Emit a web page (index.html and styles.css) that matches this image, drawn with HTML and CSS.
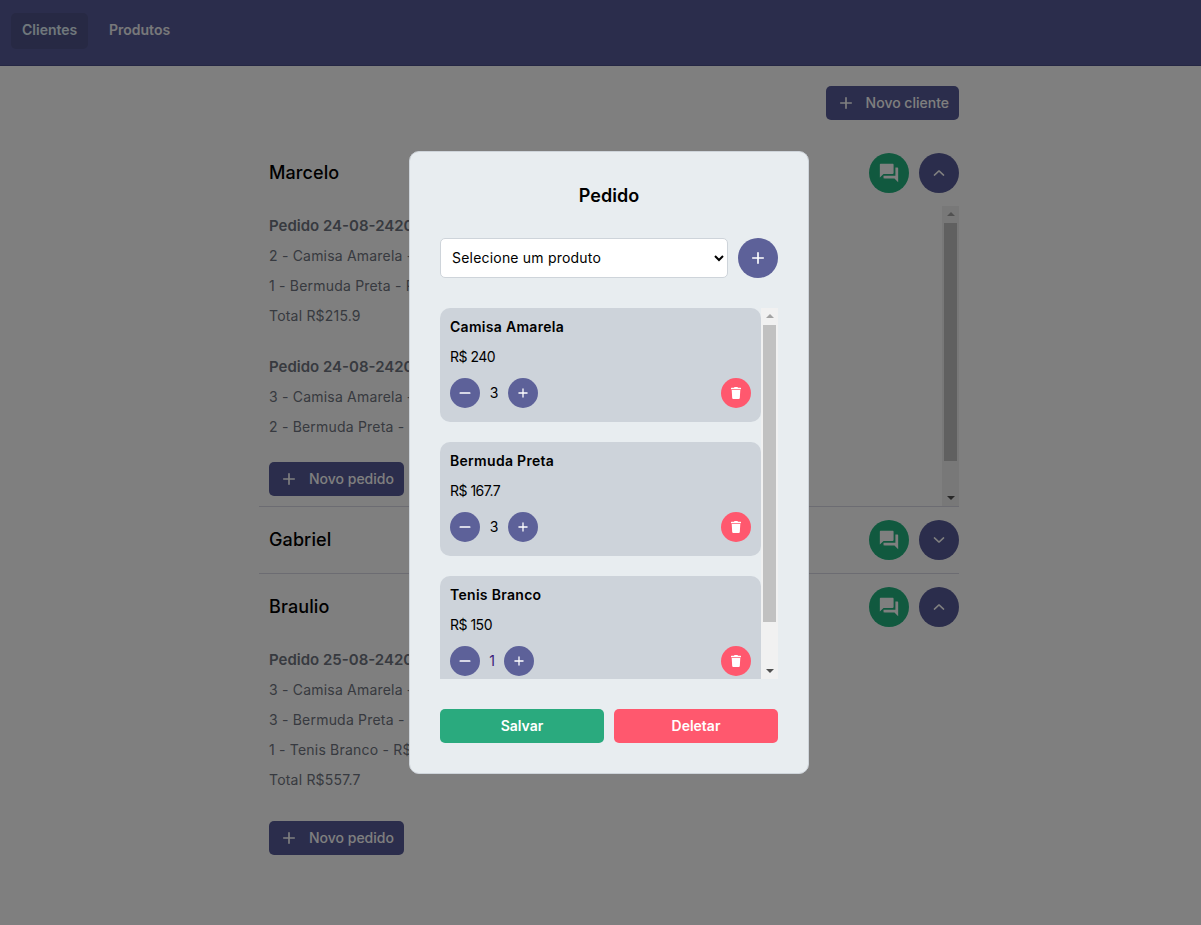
FILE: index.html
```html
<!DOCTYPE html>
<html lang="pt-BR">

<head>
    <meta charset="UTF-8">
    <title>Clientes</title>
    <link rel="stylesheet" href="styles.css">
</head>

<body>
    <svg class="sprites" width="0" height="0">
        <symbol id="i-plus" viewBox="0 0 24 24"><path d="M12 5v14M5 12h14" fill="none" stroke="currentColor" stroke-width="2.2" stroke-linecap="round"/></symbol>
        <symbol id="i-minus" viewBox="0 0 24 24"><path d="M5 12h14" fill="none" stroke="currentColor" stroke-width="2.6" stroke-linecap="round"/></symbol>
        <symbol id="i-up" viewBox="0 0 24 24"><path d="M6.500 14.500 12 9.500l5.500 5" fill="none" stroke="currentColor" stroke-width="1.8" stroke-linecap="round" stroke-linejoin="round"/></symbol>
        <symbol id="i-down" viewBox="0 0 24 24"><path d="M6.500 9.500 12 14.500l5.500-5" fill="none" stroke="currentColor" stroke-width="1.8" stroke-linecap="round" stroke-linejoin="round"/></symbol>
        <symbol id="i-chat" viewBox="0 0 24 24"><path fill="currentColor" d="M21 6h-2v9H6v2c0 .55.45 1 1 1h11l4 4V7c0-.55-.45-1-1-1zm-4 6V3c0-.55-.45-1-1-1H3c-.55 0-1 .45-1 1v14l4-4h10c.55 0 1-.45 1-1z"/></symbol>
        <symbol id="i-trash" viewBox="0 0 448 512" preserveAspectRatio="none"><path fill="currentColor" d="M432 32H312l-9.400-18.700A24 24 0 0 0 281.100 0H166.800a23.720 23.720 0 0 0-21.400 13.300L136 32H16A16 16 0 0 0 0 48v32a16 16 0 0 0 16 16h416a16 16 0 0 0 16-16V48a16 16 0 0 0-16-16zM53.200 467a48 48 0 0 0 47.900 45h245.800a48 48 0 0 0 47.900-45L416 128H32z"/></symbol>
    </svg>

    <nav class="navbar">
        <a class="nav-link active" href="#">Clientes</a>
        <a class="nav-link" href="#">Produtos</a>
    </nav>

    <main class="content">
        <div class="toolbar">
            <button class="btn-add"><svg class="icon-18"><use href="#i-plus"/></svg>Novo cliente</button>
        </div>

        <section class="client">
            <div class="client-head">
                <h2>Marcelo</h2>
                <div class="client-actions">
                    <button class="round green"><svg class="icon-22"><use href="#i-chat"/></svg></button>
                    <button class="round navy"><svg class="icon-20"><use href="#i-up"/></svg></button>
                </div>
            </div>
            <div class="scroll-area orders-area">
                <div class="scroll-body orders">
                    <div class="orders-clip">
                        <div class="order">
                            <h3>Pedido 24-08-2420:15</h3>
                            <p>2 - Camisa Amarela - R$ 120</p>
                            <p>1 - Bermuda Preta - R$ 95.9</p>
                            <p>Total R$215.9</p>
                        </div>
                        <div class="order">
                            <h3>Pedido 24-08-2420:32</h3>
                            <p>3 - Camisa Amarela - R$ 120</p>
                            <p>2 - Bermuda Preta - R$ 95.9</p>
                        </div>
                    </div>
                    <button class="btn-add"><svg class="icon-18"><use href="#i-plus"/></svg>Novo pedido</button>
                </div>
                <div class="scrollbar">
                    <span class="sb-up"></span>
                    <span class="sb-thumb thumb-orders"></span>
                    <span class="sb-down"></span>
                </div>
            </div>
        </section>

        <section class="client">
            <div class="client-head">
                <h2>Gabriel</h2>
                <div class="client-actions">
                    <button class="round green"><svg class="icon-22"><use href="#i-chat"/></svg></button>
                    <button class="round navy"><svg class="icon-20"><use href="#i-down"/></svg></button>
                </div>
            </div>
        </section>

        <section class="client">
            <div class="client-head">
                <h2>Braulio</h2>
                <div class="client-actions">
                    <button class="round green"><svg class="icon-22"><use href="#i-chat"/></svg></button>
                    <button class="round navy"><svg class="icon-20"><use href="#i-up"/></svg></button>
                </div>
            </div>
            <div class="orders">
                <div class="order">
                    <h3>Pedido 25-08-2420:05</h3>
                    <p>3 - Camisa Amarela - R$ 80</p>
                    <p>3 - Bermuda Preta - R$ 55.9</p>
                    <p>1 - Tenis Branco - R$ 150</p>
                    <p>Total R$557.7</p>
                </div>
                <button class="btn-add"><svg class="icon-18"><use href="#i-plus"/></svg>Novo pedido</button>
            </div>
        </section>
    </main>

    <div class="overlay">
        <div class="modal">
            <h2 class="modal-title">Pedido</h2>

            <div class="product-picker">
                <select class="product-select">
                    <option>Selecione um produto</option>
                </select>
                <button class="round indigo"><svg class="icon-18"><use href="#i-plus"/></svg></button>
            </div>

            <div class="scroll-area cart-area">
                <div class="scroll-body cart">
                    <div class="cart-item">
                        <h4>Camisa Amarela</h4>
                        <p>R$ 240</p>
                        <div class="cart-controls">
                            <button class="round indigo small"><svg class="icon-16"><use href="#i-minus"/></svg></button>
                            <span class="qty">3</span>
                            <button class="round indigo small"><svg class="icon-14"><use href="#i-plus"/></svg></button>
                            <button class="round red small trash"><svg class="icon-trash"><use href="#i-trash"/></svg></button>
                        </div>
                    </div>
                    <div class="cart-item">
                        <h4>Bermuda Preta</h4>
                        <p>R$ 167.7</p>
                        <div class="cart-controls">
                            <button class="round indigo small"><svg class="icon-16"><use href="#i-minus"/></svg></button>
                            <span class="qty">3</span>
                            <button class="round indigo small"><svg class="icon-14"><use href="#i-plus"/></svg></button>
                            <button class="round red small trash"><svg class="icon-trash"><use href="#i-trash"/></svg></button>
                        </div>
                    </div>
                    <div class="cart-item">
                        <h4>Tenis Branco</h4>
                        <p>R$ 150</p>
                        <div class="cart-controls">
                            <button class="round indigo small"><svg class="icon-16"><use href="#i-minus"/></svg></button>
                            <span class="qty qty-one">1</span>
                            <button class="round indigo small"><svg class="icon-14"><use href="#i-plus"/></svg></button>
                            <button class="round red small trash"><svg class="icon-trash"><use href="#i-trash"/></svg></button>
                        </div>
                    </div>
                </div>
                <div class="scrollbar">
                    <span class="sb-up"></span>
                    <span class="sb-thumb thumb-cart"></span>
                    <span class="sb-down"></span>
                </div>
            </div>

            <div class="modal-actions">
                <button class="btn-save">Salvar</button>
                <button class="btn-delete">Deletar</button>
            </div>
        </div>
    </div>
</body>

</html>
```

FILE: styles.css
```css
/* Reset & Global Styling */
* {
    margin: 0;
    padding: 0;
    box-sizing: border-box;
}

body {
    font-family: 'Inter', 'Noto Sans', sans-serif;
    font-size: 14px;
    line-height: 20px;
    color: #000;
    background-color: #fff;
    overflow: hidden;
    height: 925px;
}

button {
    font-family: inherit;
    border: none;
    cursor: pointer;
}

.sprites {
    position: absolute;
}

svg {
    display: block;
    flex: none;
}

.icon-14 { width: 14px; height: 14px; }
.icon-16 { width: 16px; height: 16px; }
.icon-18 { width: 18px; height: 18px; margin: 0 1px; }
.icon-20 { width: 20px; height: 20px; }
.icon-22 { width: 22px; height: 22px; }
.icon-trash { width: 10px; height: 12px; }

/* Navbar */
.navbar {
    display: flex;
    align-items: center;
    height: 66px;
    padding: 0 10px 3px 11px;
    background-color: #575b98;
    border-bottom: 1px solid #4a4e88;
}

.nav-link {
    padding: 7px 11px 9px;
    border-radius: 5px;
    font-weight: 600;
    text-decoration: none;
    color: #f0f0f4;
}

.nav-link.active {
    width: 77px;
    margin-right: 10px;
    background-color: #4f5288;
    color: #e0f0f8;
}

/* Client list */
.content {
    width: 700px;
    margin-left: 259px;
    padding-top: 20px;
}

.toolbar {
    display: flex;
    justify-content: flex-end;
    margin-bottom: 23px;
}

.btn-add {
    display: flex;
    align-items: center;
    gap: 10px;
    height: 34px;
    padding: 0 10px 2px;
    border-radius: 5px;
    background-color: #575b98;
    color: #fff;
    font-size: 14px;
    font-weight: 500;
    white-space: nowrap;
}

.btn-add svg {
    margin-top: 2px;
}

.client {
    border-bottom: 1px solid #d8d8e4;
    margin-bottom: 3px;
}

.client:last-child {
    border-bottom: none;
}

.client-head {
    display: flex;
    justify-content: space-between;
    align-items: center;
    height: 60px;
    margin-bottom: 3px;
    padding-left: 10px;
}

.client-head h2 {
    font-size: 18px;
    font-weight: 500;
    letter-spacing: 0.1px;
}

.client-actions {
    display: flex;
    gap: 10px;
}

.round {
    display: flex;
    align-items: center;
    justify-content: center;
    width: 40px;
    height: 40px;
    border-radius: 50%;
    color: #fff;
    flex: none;
}

.round.small {
    width: 30px;
    height: 30px;
}

.green { background-color: #22b37f; }
.navy { background-color: #575b98; }
.indigo { background-color: #5d6199; }
.red { background-color: #ff586e; }

.orders {
    padding: 10px 10px 0;
}

.orders-clip {
    height: 236px;
    margin-bottom: 10px;
}

.order {
    margin-bottom: 31px;
    white-space: nowrap;
    color: #6f7480;
}

.order h3 {
    font-size: 15px;
    font-weight: 600;
    line-height: 20px;
    margin-bottom: 10px;
}

.order p {
    margin-bottom: 10px;
    letter-spacing: 0.2px;
}

/* Scroll areas with their scrollbar */
.scroll-area {
    display: flex;
    overflow: hidden;
}

.scroll-body {
    flex: 1;
    min-width: 0;
    overflow: hidden;
}

.orders-area {
    height: 300px;
}

.cart-area {
    height: 371px;
    margin-top: 30px;
}

.scrollbar {
    display: flex;
    flex-direction: column;
    align-items: center;
    flex: none;
    width: 17px;
    padding-top: 6px;
    background-color: #f1f1f1;
}

.sb-up {
    width: 0;
    height: 0;
    border-left: 4px solid transparent;
    border-right: 4px solid transparent;
    border-bottom: 4px solid #a3a3a3;
}

.sb-thumb {
    width: 13px;
    margin-top: 7px;
    background-color: #c1c1c1;
}

.thumb-orders { height: 238px; }
.thumb-cart { height: 297px; }

.sb-down {
    width: 0;
    height: 0;
    margin-top: auto;
    margin-bottom: 6px;
    border-left: 4px solid transparent;
    border-right: 4px solid transparent;
    border-top: 4px solid #505050;
}

/* Modal */
.overlay {
    position: fixed;
    inset: 0;
    display: flex;
    align-items: center;
    justify-content: center;
    padding-left: 17px;
    background-color: rgba(0, 0, 0, 0.5);
}

.modal {
    width: 400px;
    height: 623px;
    padding: 30px;
    background-color: #e8edf0;
    border: 1px solid #ced4da;
    border-radius: 10px;
}

.modal-title {
    font-size: 18px;
    font-weight: 600;
    line-height: 27px;
    text-align: center;
}

.product-picker {
    display: flex;
    gap: 10px;
    margin-top: 29px;
}

.product-select {
    flex: 1;
    min-width: 0;
    height: 40px;
    padding: 0 7px 2px;
    font-family: inherit;
    font-size: 14px;
    letter-spacing: 0.2px;
    color: #000;
    background-color: #fff;
    border: 1px solid #ced4da;
    border-radius: 5px;
}

.cart-item {
    height: 114px;
    padding: 9px 10px 0;
    margin-bottom: 20px;
    border-radius: 10px;
    background-color: #cdd3da;
}

.cart-item h4 {
    font-size: 14px;
    font-weight: 600;
    letter-spacing: 0.3px;
    line-height: 20px;
}

.cart-item p {
    margin-top: 10px;
    letter-spacing: -0.5px;
}

.cart-controls {
    display: flex;
    align-items: center;
    margin-top: 11px;
}

.qty {
    display: flex;
    justify-content: center;
    width: 8px;
    margin: 0 10px;
}

.qty-one {
    width: 4px;
    color: #3a1a78;
}

.trash {
    margin-left: auto;
}

.modal-actions {
    display: flex;
    gap: 10px;
    margin-top: 30px;
}

.modal-actions button {
    flex: 1;
    height: 34px;
    padding-bottom: 2px;
    border-radius: 5px;
    color: #fff;
    font-size: 14px;
    font-weight: 600;
}

.btn-save { background-color: #2aaa7e; }
.btn-delete { background-color: #ff586e; }
```
